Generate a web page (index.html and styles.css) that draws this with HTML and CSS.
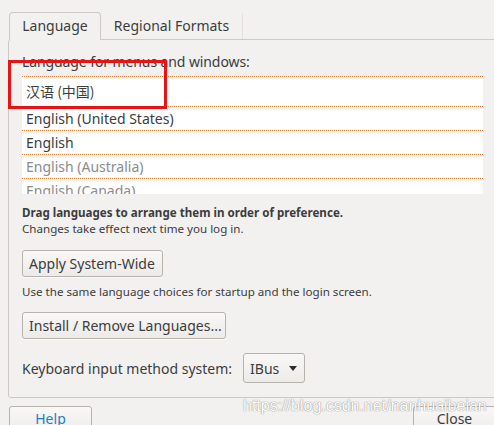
FILE: index.html
```html
<!DOCTYPE html>
<html>
<head>
<meta charset="utf-8">
<link rel="stylesheet" href="styles.css">
</head>
<body>
<div class="page">
  <div class="tabs">
    <div class="tab tab-active">Language</div>
    <div class="tab tab-other">Regional Formats</div>
  </div>
  <div class="frame">
    <div class="label">Language for menus and windows:</div>
    <div class="list">
      <div class="row row-first cjk">汉语 (中国)</div>
      <div class="row">English (United States)</div>
      <div class="row">English</div>
      <div class="row row-dim">English (Australia)</div>
      <div class="row row-dim">English (Canada)</div>
    </div>
    <div class="hint hint-bold">Drag languages to arrange them in order of preference.</div>
    <div class="hint">Changes take effect next time you log in.</div>
    <div class="btn btn-apply">Apply System-Wide</div>
    <div class="hint hint-use">Use the same language choices for startup and the login screen.</div>
    <div class="btn btn-install">Install / Remove Languages...</div>
    <div class="kbd-row">
      <span class="kbd-label">Keyboard input method system:</span>
      <div class="combo"><span>IBus</span><span class="arrow"></span></div>
    </div>
  </div>
  <div class="footer">
    <div class="btn btn-foot btn-help">Help</div>
    <div class="btn btn-foot btn-close">Close</div>
  </div>
</div>
<div class="highlight"></div>
<div class="watermark">https://blog.csdn.net/nanhuaibeian</div>
</body>
</html>
```

FILE: styles.css
```css
html, body {
  margin: 0;
  padding: 0;
}
body {
  width: 494px;
  height: 425px;
  overflow: hidden;
  background: #f2f1f0;
  font-family: "Noto Sans", "Noto Sans CJK SC", sans-serif;
  color: #3c3c3c;
  position: relative;
}
.page {
  padding: 12px 0 0 8px;
}
.tabs {
  display: flex;
  height: 27px;
  padding-left: 1px;
}
.tab {
  font-size: 14px;
  line-height: 26px;
  box-sizing: border-box;
}
.tab-active {
  width: 92px;
  height: 28px;
  text-align: center;
  border: 1px solid #cdc8c3;
  border-bottom: none;
  border-radius: 4px 4px 0 0;
  background: #f2f1f0;
  position: relative;
  z-index: 1;
}
.tab-other {
  width: 142px;
  height: 26px;
  margin-top: 1px;
  text-align: center;
  border-right: 1px solid #e2dfdc;
}
.frame {
  width: 520px;
  height: 357px;
  box-sizing: content-box;
  border: 1px solid #cdc8c3;
  border-radius: 3px;
  padding: 0 0 0 13px;
}
.label {
  font-size: 14px;
  line-height: 20px;
  margin-top: 12px;
  letter-spacing: -0.1px;
}
.list {
  margin-top: 4px;
  width: 461px;
  height: 118px;
  overflow: hidden;
  background: #ffffff;
}
.row {
  font-size: 14px;
  height: 24px;
  line-height: 23px;
  box-sizing: border-box;
  padding-left: 4px;
  border-bottom: 1px dotted #f07a2e;
}
.row-first {
  height: 31px;
  line-height: 28px;
  border-top: 1px dotted #f07a2e;
}
.row-dim {
  color: #8b8b8b;
}
.cjk {
  font-family: "Noto Sans CJK SC", "Noto Sans", sans-serif;
}
.hint {
  font-size: 11.6px;
  line-height: 16px;
}
.hint-bold {
  font-weight: bold;
  margin-top: 11px;
}
.hint-use {
  margin-top: 7px;
}
.btn {
  display: inline-block;
  box-sizing: border-box;
  font-size: 14px;
  border: 1px solid #b8b2ac;
  border-radius: 3px;
  background: linear-gradient(#f9f8f7, #ecebe9);
  box-shadow: 0 1px 0 rgba(255,255,255,0.6);
}
.btn-apply {
  display: block;
  width: 141px;
  height: 27px;
  line-height: 25px;
  margin-top: 13px;
  padding-left: 6px;
}
.btn-install {
  display: block;
  width: 204px;
  height: 27px;
  line-height: 25px;
  margin-top: 12px;
  padding-left: 6px;
}
.kbd-row {
  display: flex;
  align-items: center;
  margin-top: 14px;
}
.kbd-label {
  font-size: 14px;
  margin-right: 11px;
}
.combo {
  box-sizing: border-box;
  width: 62px;
  height: 30px;
  border: 1px solid #b8b2ac;
  border-radius: 3px;
  background: linear-gradient(#f9f8f7, #ecebe9);
  font-size: 14px;
  display: flex;
  align-items: center;
  padding-left: 6px;
}
.arrow {
  width: 0;
  height: 0;
  border-left: 4px solid transparent;
  border-right: 4px solid transparent;
  border-top: 5px solid #2b2b2b;
  margin-left: 10px;
}
.footer {
  display: flex;
  justify-content: space-between;
  margin-top: 8px;
  padding-left: 1px;
  width: 487px;
}
.btn-foot {
  width: 83px;
  height: 30px;
  text-align: center;
  line-height: 24px;
}
.btn-help {
  color: #1f7fc4;
}
.highlight {
  position: absolute;
  left: 8px;
  top: 60px;
  width: 159px;
  height: 49px;
  box-sizing: border-box;
  border: 3px solid #e81414;
}
.watermark {
  position: absolute;
  left: 243px;
  top: 397px;
  font-family: "Liberation Sans", Arial, sans-serif;
  font-size: 16px;
  color: #ffffff;
  text-shadow: 0 0 1px rgba(110,110,110,0.8), 0 0 1px rgba(110,110,110,0.5);
  white-space: nowrap;
}
```
